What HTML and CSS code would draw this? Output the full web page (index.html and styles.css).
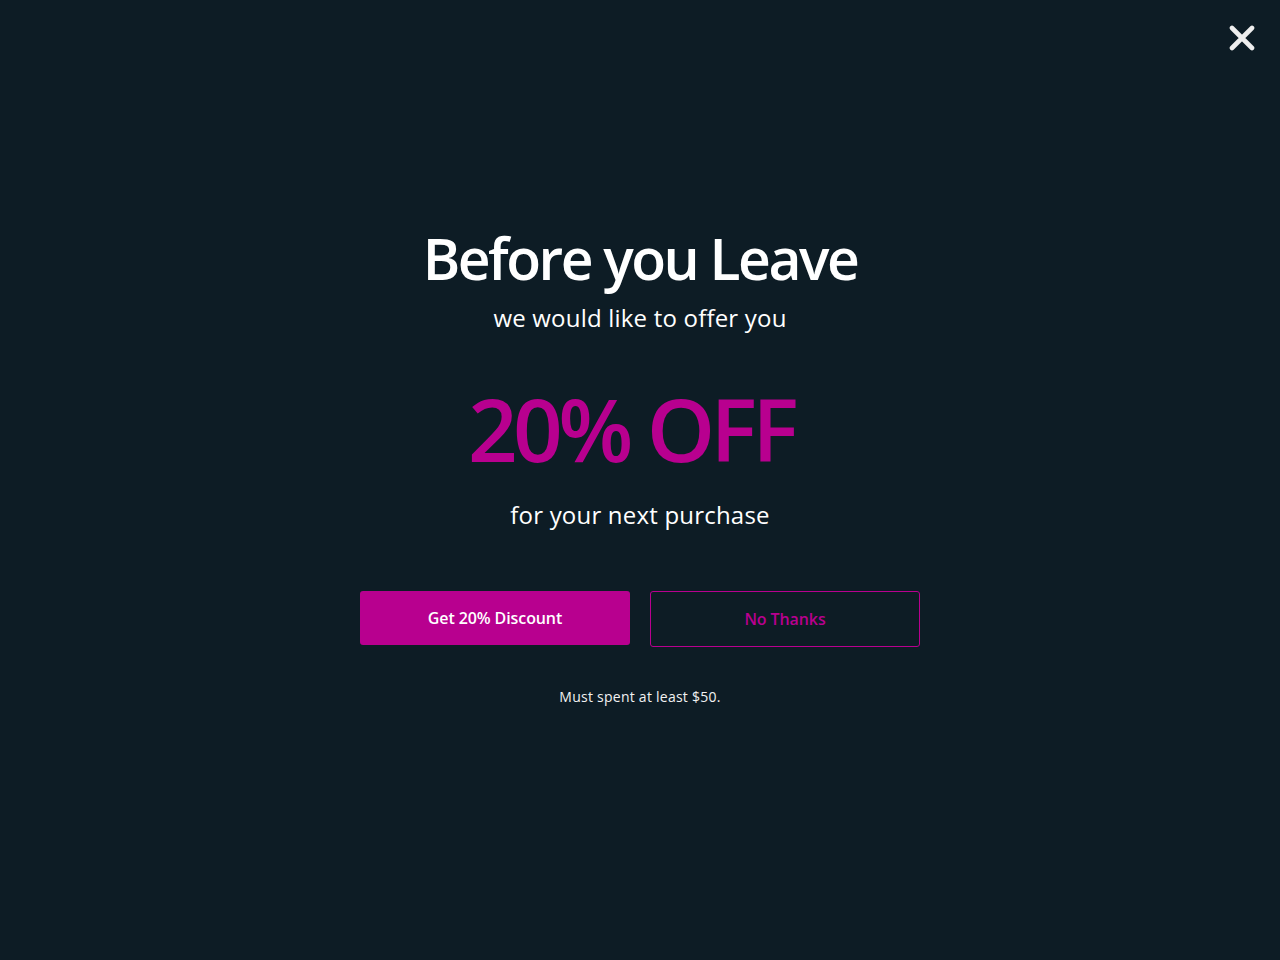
FILE: index.html
```html
<!DOCTYPE html>
<html lang="en">
<head>
<meta charset="utf-8">
<title>Before you Leave</title>
<link rel="stylesheet" href="styles.css">
</head>
<body>
<div class="overlay">
  <button class="close" aria-label="Close">
    <svg viewBox="0 0 26 26" width="26" height="26"><path d="M3 3 L23 23 M23 3 L3 23" stroke="#eeeeee" stroke-width="4.6" stroke-linecap="round" fill="none"/></svg>
  </button>
  <div class="popup">
    <h1 class="title">Before you Leave</h1>
    <p class="sub">we would like to offer you</p>
    <div class="offer">20% OFF</div>
    <p class="sub next">for your next purchase</p>
    <div class="actions">
      <button class="btn primary">Get 20% Discount</button>
      <button class="btn outline">No Thanks</button>
    </div>
    <p class="note">Must spent at least $50.</p>
  </div>
</div>
</body>
</html>
```
FILE: styles.css
```css
html, body {
  margin: 0;
  padding: 0;
  height: 100%;
}
body {
  background: #0d1c25;
  font-family: "Open Sans", "Liberation Sans", sans-serif;
  color: #ffffff;
}
.overlay {
  position: relative;
  height: 960px;
  display: flex;
  justify-content: center;
}
.close {
  position: absolute;
  top: 25px;
  right: 25px;
  width: 26px;
  height: 26px;
  padding: 0;
  border: 0;
  background: none;
  cursor: pointer;
}
.close svg { display: block; }
.popup {
  display: flex;
  flex-direction: column;
  align-items: center;
  padding-top: 218px;
}
.title {
  margin: 0;
  font-size: 57px;
  font-weight: 600;
  letter-spacing: -2.5px;
  line-height: 80px;
}
.sub {
  margin: 0;
  font-size: 24px;
  letter-spacing: 0.2px;
  line-height: 40px;
}
.offer {
  margin-top: 40px;
  padding-right: 18px;
  font-size: 87px;
  font-weight: 600;
  letter-spacing: -4.6px;
  line-height: 100px;
  color: #b8008f;
}
.next { margin-top: 17px; }
.actions {
  display: flex;
  gap: 20px;
  margin-top: 56px;
  align-items: flex-start;
}
.btn {
  width: 270px;
  font-family: "Open Sans", "Liberation Sans", sans-serif;
  font-size: 16px;
  font-weight: 600;
  letter-spacing: -0.1px;
  border-radius: 3px;
  cursor: pointer;
}
.primary {
  height: 54px;
  background: #b8008f;
  color: #ffffff;
  border: 0;
}
.outline {
  height: 56px;
  background: transparent;
  color: #b8008f;
  border: 1px solid #b8008f;
}
.note {
  margin: 40px 0 0;
  font-size: 14px;
  letter-spacing: 0.25px;
  line-height: 20px;
  color: #f2f2f2;
}
```
